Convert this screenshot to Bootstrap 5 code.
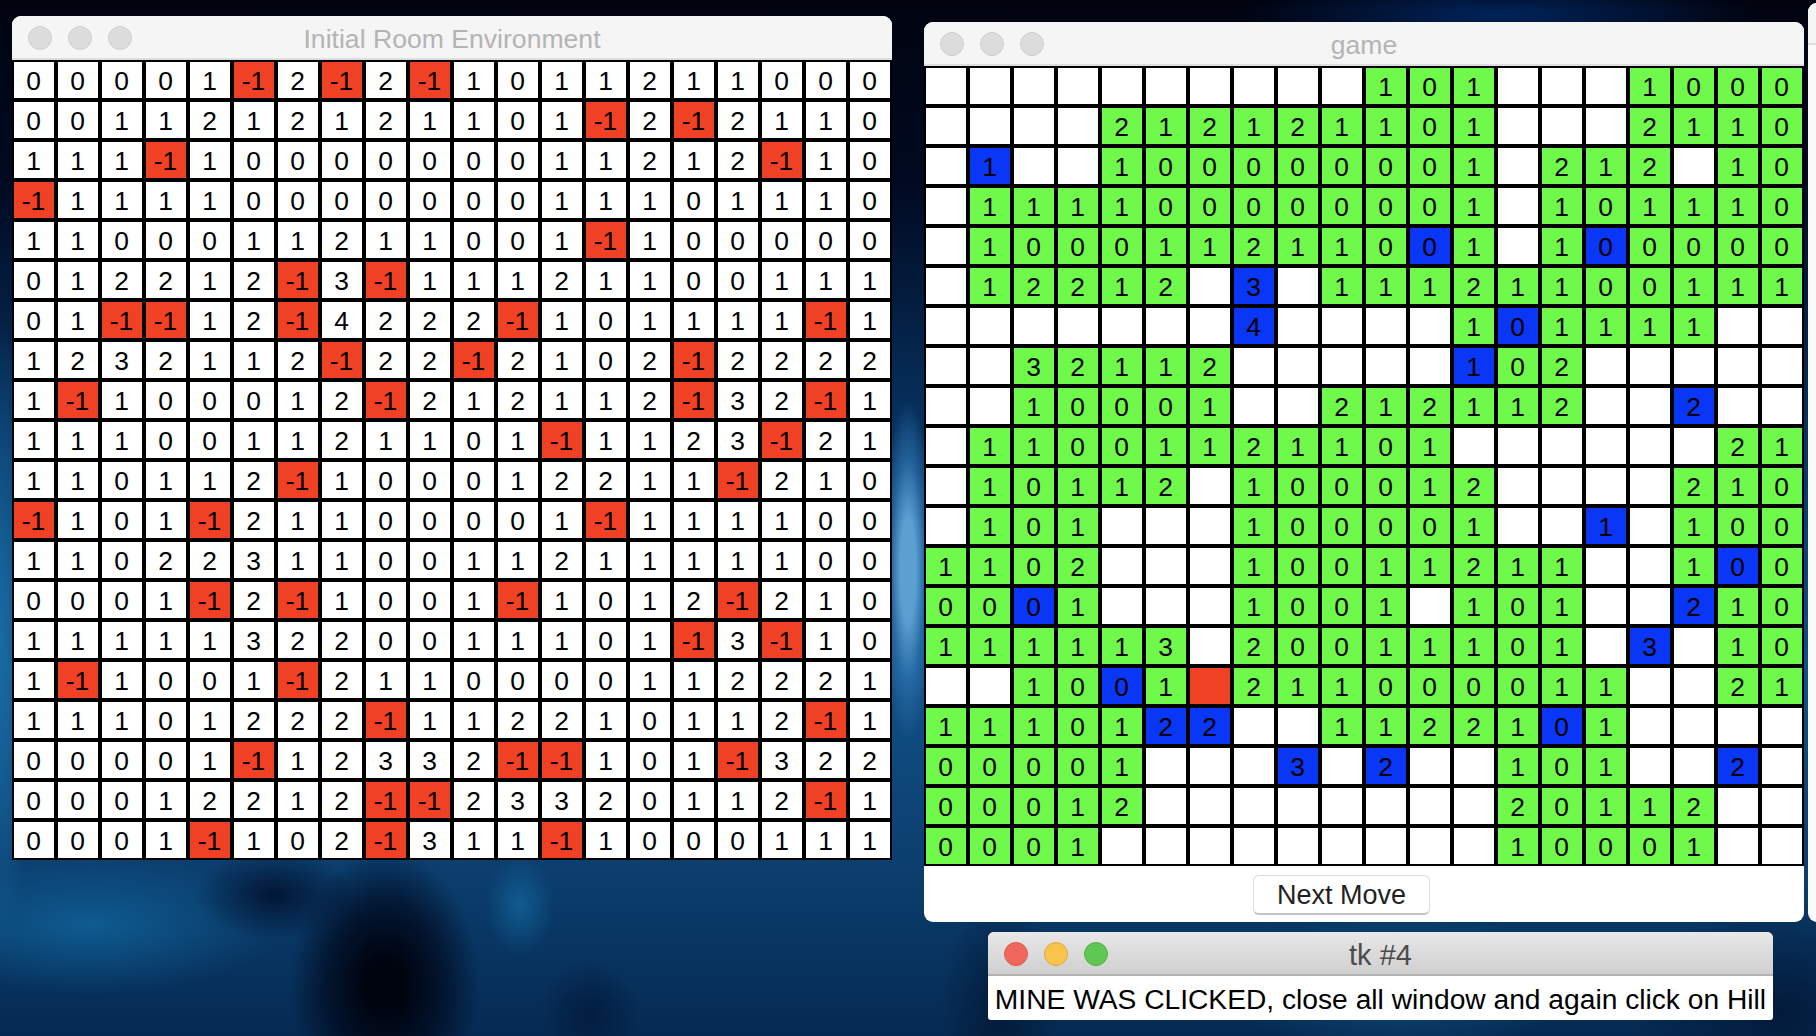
<!DOCTYPE html>
<html lang="en">
<head>
<meta charset="utf-8">
<title>Initial Room Environment</title>
<link href="https://cdn.jsdelivr.net/npm/bootstrap@5.3.0/dist/css/bootstrap.min.css" rel="stylesheet">
<style>
html,body{height:100%;}
body{width:1816px;height:1036px;overflow:hidden;position:relative;font-family:"Liberation Sans",Arial,sans-serif;color:#000;
background:
 radial-gradient(ellipse 60px 120px at 1000px 1010px,rgba(1,20,45,.7),transparent),
 radial-gradient(ellipse 150px 110px at 1780px 1010px,rgba(2,22,52,.8),transparent),
 radial-gradient(ellipse 95px 135px at 385px 985px,rgba(0,3,14,.98) 20%,rgba(0,8,28,.7) 60%,transparent),
 radial-gradient(ellipse 80px 45px at 275px 895px,rgba(1,16,42,.85),transparent),
 radial-gradient(ellipse 50px 55px at 590px 1015px,rgba(2,24,56,.8),transparent),
 radial-gradient(ellipse 35px 50px at 520px 905px,rgba(20,105,160,.7),transparent),
 radial-gradient(ellipse 190px 70px at 90px 925px,rgba(16,100,155,.8),transparent),
 radial-gradient(ellipse 180px 70px at 1400px 985px,rgba(24,95,145,.6),transparent),
 radial-gradient(ellipse 26px 170px at 908px 570px,rgba(92,160,210,1) 30%,rgba(45,115,175,.7) 65%,transparent),
 radial-gradient(ellipse 34px 320px at 0px 640px,rgba(26,110,165,.9),transparent),
 radial-gradient(ellipse 260px 34px at 1500px 14px,rgba(0,36,92,1),transparent),
 linear-gradient(180deg,#01030f 0,#010a22 18%,#06305c 40%,#115086 65%,#0b3e6e 84%,#052a52 100%);}
.tkwin{background:#fff;overflow:hidden;}
.win-a{left:12px;top:16px;width:880px;height:844px;border-radius:9px 9px 0 0;}
.win-b{left:924px;top:22px;width:880px;height:900px;border-radius:9px 9px 9px 9px;}
.win-c{left:988px;top:932px;width:785px;height:88px;border-radius:6px 6px 3px 3px;}
.win-d{left:1808px;top:3px;width:20px;height:919px;background:#fafafa;border-radius:9px 0 0 9px;}
.edgebar{height:42px;background:#f5f5f5;border-bottom:2px solid #dedede;}
.tbar{height:44px;background:#f5f5f5;border-bottom:2px solid #dedede;color:#b4b4b4;font-size:26.6px;line-height:46px;}
.tbar-on{background:linear-gradient(180deg,#e8e8e8,#cfcfcf);border-bottom:2px solid #b2b2b2;color:#4c4c4c;font-size:29px;}
.dotset{left:16px;top:10px;gap:16px;}
.wdot{width:24px;height:24px;background:#dcdcdc;border:1px solid #d0d0d0;}
.dot-r{background:#f0685c;border-color:#e25448;}
.dot-y{background:#f8c44e;border-color:#e0a93a;}
.dot-g{background:#5fc854;border-color:#4fae46;}
.gridwrap{grid-template-columns:repeat(20,40px);grid-auto-rows:36px;gap:4px;padding:2px;background:#000;width:880px;}
.gcell{background:#fff;font-size:26.4px;line-height:38px;text-align:center;padding-right:1px;overflow:hidden;}
.gcell-mine{background:#f04124;}
.gcell-safe{background:#6ff94b;}
.gcell-pick{background:#0a37f5;}
.footbar{height:56px;padding-left:329px;padding-top:9px;}
.nextbtn{width:177px;height:40px;padding:0;font-size:27px;line-height:38px;color:#222;background:#fff;border:1px solid #dcdcdc;border-bottom:2px solid #c4c4c4;border-radius:6px;}
.msgline{height:44px;font-size:28.2px;line-height:46px;white-space:nowrap;}
</style>
</head>
<body>

<div class="tkwin win-d position-absolute"><div class="edgebar"></div></div>

<div class="tkwin win-a position-absolute">
  <div class="tbar position-relative text-center">
    <div class="dotset position-absolute d-flex"><span class="wdot rounded-circle"></span><span class="wdot rounded-circle"></span><span class="wdot rounded-circle"></span></div>
    Initial Room Environment
  </div>
  <div class="gridwrap d-grid" id="roomgrid"></div>
</div>

<div class="tkwin win-b position-absolute">
  <div class="tbar position-relative text-center">
    <div class="dotset position-absolute d-flex"><span class="wdot rounded-circle"></span><span class="wdot rounded-circle"></span><span class="wdot rounded-circle"></span></div>
    game
  </div>
  <div class="gridwrap d-grid" id="gamegrid"></div>
  <div class="footbar d-flex align-items-start"><button type="button" class="btn nextbtn">Next Move</button></div>
</div>

<div class="tkwin win-c position-absolute">
  <div class="tbar tbar-on position-relative text-center">
    <div class="dotset position-absolute d-flex"><span class="wdot rounded-circle dot-r"></span><span class="wdot rounded-circle dot-y"></span><span class="wdot rounded-circle dot-g"></span></div>
    tk #4
  </div>
  <div class="msgline text-center">MINE WAS CLICKED, close all window and again click on Hill</div>
</div>

<script>
var room=[
"00001x2x2x1011211000",
"00112121211 01x2x2110",
"111x100000001121 2x10",
"x1111000000011101110",
"11000112110 01x100000",
"012212x3x11121100111",
"01xx12x42 22x1011 11x1",
"12321 12x22x2102x2222",
"1x1000 12x21211 2x32x1",
"11100112110 1x1123x21",
"11011 2x100012211x210",
"x101x2110000 1x111100",
"11022311001 12111 1100",
"0001x2x1001x1012x210",
"11111322001110 1x3x10",
"1x1001x2110000112221",
"11101222x11221011 2x1",
"00001x123 32xx101x322",
"00012212xx2332011 2x1",
"0001x102x311x1000111"];
var game=[
"..........101...1000",
"....2121211 01...2110",
".b..100000001.212.10",
".1111000000 01.101110",
".1000112110a1.1a0000",
".12212.d.11121100111",
".......e....1a1111..",
"..32112.....b02.....",
"..10001..2121 12..c..",
".1100112110 1......21",
".10112.10001 2....210",
".101...100001..b.100",
"1102...1001121 1..1a0",
"00a1...1001.101..c10",
"111113.2001110 1.d.10",
"..10a1#21100001 1..21",
"11101cc..11221a1....",
"00001...d.c..101..c.",
"00012........20112..",
"0001.........10001.."];
function build(id,rows,mode){
  var h=document.getElementById(id);
  rows.forEach(function(r){
    var s=r.replace(/\s/g,'');
    for(var i=0;i<s.length;i++){
      var c=s[i],d=document.createElement('div');
      d.className='gcell';
      if(mode==='room'){
        if(c==='x'){d.className+=' gcell-mine';d.textContent='-1';}
        else d.textContent=c;
      }else{
        if(c==='#')d.className+=' gcell-mine';
        else if(c>='a'&&c<='e'){d.className+=' gcell-pick';d.textContent='abcde'.indexOf(c);}
        else if(c!=='.'){d.className+=' gcell-safe';d.textContent=c;}
      }
      h.appendChild(d);
    }
  });
}
build('roomgrid',room,'room');
build('gamegrid',game,'game');
</script>
<script src="https://cdn.jsdelivr.net/npm/bootstrap@5.3.0/dist/js/bootstrap.bundle.min.js"></script>
</body>
</html>
